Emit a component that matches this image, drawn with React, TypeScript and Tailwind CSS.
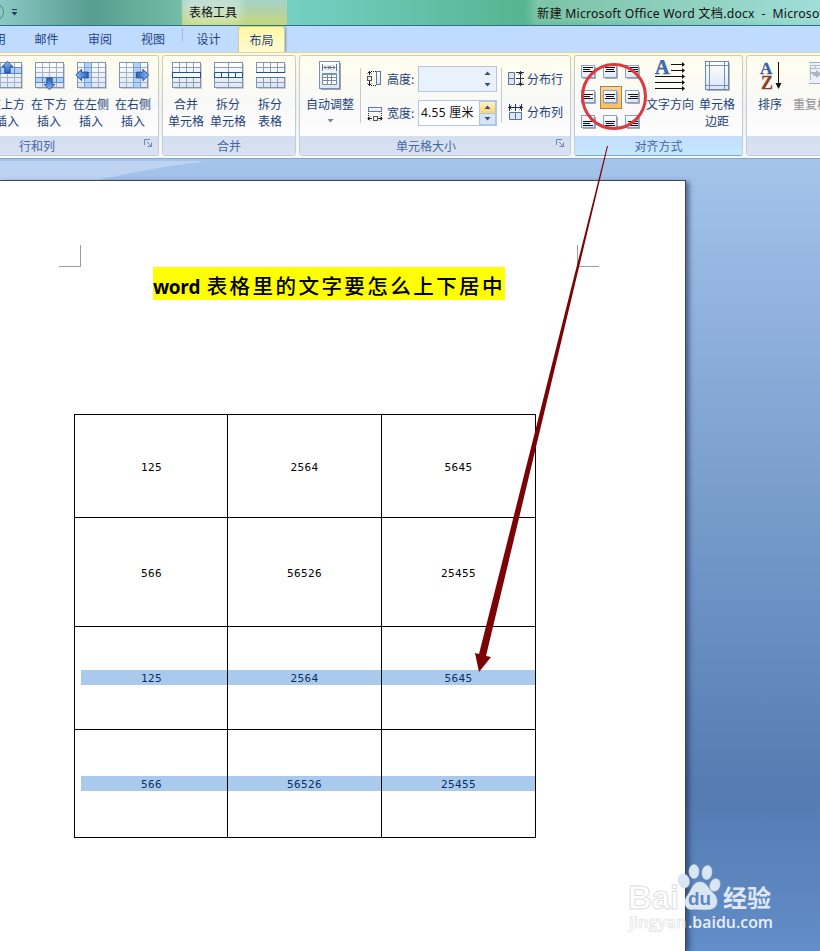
import React from "react";

const UI = "font-['Noto_Sans','Noto_Sans_CJK_SC',sans-serif]";
const CJK = "font-['Noto_Sans_CJK_SC',sans-serif]";

function GridIcon({ kind }: { kind: "above" | "below" | "left" | "right" | "merge" | "split" | "table" }) {
  const arrow = "M0 -7 L6 -1 H3 V6 H-3 V-1 H-6 Z";
  const insert = kind === "above" || kind === "below" || kind === "left" || kind === "right";
  return (
    <svg width="32" height="31" viewBox="-1 -1 32 31">
      <defs>
        <linearGradient id="sheet" x1="0" y1="0" x2="0" y2="1">
          <stop offset="0" stopColor="#fff" />
          <stop offset="1" stopColor="#dbe6f7" />
        </linearGradient>
        <linearGradient id="arrowFill" x1="0" y1="0" x2="0" y2="1">
          <stop offset="0" stopColor="#8db9f2" />
          <stop offset="1" stopColor="#2860b8" />
        </linearGradient>
      </defs>
      <rect x="3" y="3" width="28" height="25" fill="#a9b2c0" opacity=".6" />
      <rect x="1.5" y="1.5" width="28" height="25" fill="url(#sheet)" stroke="#8293ad" />
      {insert && (
        <>
          <path d="M8.5 2V26M15.5 2V26M22.5 2V26M2 6.500H29M2 11.500H29M2 16.500H29M2 21.500H29" stroke="#a6b1c5" />
          {kind === "above" && <path d="M1.500 6.500H29.500V12.500H1.500ZM8.500 6.500V12M15.500 6.500V12M22.500 6.500V12" fill="#b3d2fa" stroke="#5c86c8" />}
          {kind === "below" && <path d="M1.500 16.500H29.500V21.500H1.500ZM8.500 16.500V21M15.500 16.500V21M22.500 16.500V21" fill="#b3d2fa" stroke="#5c86c8" />}
          {kind === "left" && <path d="M8.500 1.500H15.500V26.500H8.500ZM8.500 6.500H15M8.500 11.500H15M8.500 16.500H15M8.500 21.500H15" fill="#b3d2fa" stroke="#7d9fd6" />}
          {kind === "right" && <path d="M15.500 1.500H22.500V26.500H15.500ZM15.500 6.500H22M15.500 11.500H22M15.500 16.500H22M15.500 21.500H22" fill="#b3d2fa" stroke="#7d9fd6" />}
          {kind === "above" && <path d={arrow} transform="translate(15.500 6.500) scale(.9)" fill="url(#arrowFill)" stroke="#224f93" />}
          {kind === "below" && <path d={arrow} transform="translate(15.500 22.500) rotate(180) scale(.9)" fill="url(#arrowFill)" stroke="#224f93" />}
          {kind === "left" && <path d={arrow} transform="translate(6.500 14) rotate(-90) scale(.95)" fill="url(#arrowFill)" stroke="#224f93" />}
          {kind === "right" && <path d={arrow} transform="translate(24 14) rotate(90) scale(.95)" fill="url(#arrowFill)" stroke="#224f93" />}
        </>
      )}
      {kind === "merge" && (
        <>
          <path d="M8.500 2V11M15.500 2V11M22.500 2V11M8.500 17V26M15.500 17V26M22.500 17V26M2 6.500H29M2 21.500H29" stroke="#8f9db6" />
          <rect x="1.500" y="11.500" width="28" height="5" fill="#f4f9ff" stroke="#24508c" />
        </>
      )}
      {kind === "split" && (
        <>
          <path d="M15.500 2V11M15.500 17V26M2 6.500H29M2 21.500H29" stroke="#8f9db6" />
          <path d="M1.500 11.500H29.500V16.500H1.500ZM8.500 11V17M15.500 11V17M22.500 11V17" fill="#f4f9ff" stroke="#24508c" />
        </>
      )}
      {kind === "table" && (
        <>
          <path d="M8.500 2V11M15.500 2V11M22.500 2V11M8.500 17V26M15.500 17V26M22.500 17V26M2 6.500H29M2 21.500H29" stroke="#8f9db6" />
          <rect x="0" y="12" width="32" height="4" fill="#fdfdfa" />
          <path d="M1 11.500H30" stroke="#24508c" />
          <path d="M1 16.500H30" stroke="#5b7aa8" />
        </>
      )}
    </svg>
  );
}

function BigButton({ icon, lines, width = "w-[42px]", muted = false }: { icon: React.ReactNode; lines: string[]; width?: string; muted?: boolean }) {
  return (
    <div className={`flex shrink-0 flex-col items-center pt-[4px] ${width}`}>
      <div className="flex h-[35px] items-start justify-center">{icon}</div>
      {lines.map((l) => (
        <span key={l} className={`block h-[17px] text-[12px] leading-[17px] whitespace-nowrap ${muted ? "text-[#8d8d8d]" : "text-[#1d3f7a]"}`}>
          {l}
        </span>
      ))}
    </div>
  );
}

function Launcher() {
  return (
    <svg width="9" height="9" viewBox="0 0 9 9" className="shrink-0">
      <path d="M.5 6V.5H6" fill="none" stroke="#6b86b0" />
      <path d="M3 3L7 7M7.500 3.500V7.500H3.500" fill="none" stroke="#6b86b0" />
    </svg>
  );
}

function Group({ width, title, launcher, active, children, flushLeft, shift = "" }: { width: string; title: string; launcher?: boolean; active?: boolean; flushLeft?: boolean; shift?: string; children: React.ReactNode }) {
  return (
    <section
      className={`flex h-[101px] shrink-0 flex-col overflow-hidden border border-[#c5cbd0] bg-linear-to-b from-[#fffeee] via-[#f8f9f8] to-white ${width} ${flushLeft ? "rounded-r-[3px] border-l-0" : "rounded-[3px]"} ${active ? "border-b-[#79a7c8]" : ""}`}
    >
      <div className="flex h-[80px] shrink-0">{children}</div>
      <div className={`flex h-[19px] shrink-0 items-center bg-linear-to-b ${active ? "from-[#c3defd] to-[#c5e8ff]" : "from-[#d2dff0] to-[#dae2f1]"}`}>
        <span className={`flex-1 text-center text-[12px] leading-[18px] text-[#46679f] ${shift}`}>{title}</span>
        {launcher && <div className="-ml-[14px] w-[14px] pb-[4px]"><Launcher /></div>}
      </div>
    </section>
  );
}

function AlignIcon({ h, v }: { h: number; v: number }) {
  const y = [2.5, 4.5, 6.5][v];
  const x = [2, 2, 3][h];
  const short = [0, 1, 2][h];
  return (
    <svg width="16" height="15" viewBox="0 0 16 15">
      <path d="M14.500 2V13.500H2" stroke="#a8a8a8" fill="none" />
      <rect x=".5" y=".5" width="13" height="12" fill="url(#sheet)" stroke="#8ba1c4" />
      <path d={`M${x} ${y}h10M${x + short} ${y + 2}h${[7, 8, 8][h]}M${x} ${y + 4}h10`} stroke="#111" strokeWidth="1" />
    </svg>
  );
}

function Spinner({ warm }: { warm?: boolean }) {
  return (
    <div className={`flex w-[17px] flex-col ${warm ? "border border-[#b3c4dc]" : ""}`}>
      <div className={`flex flex-1 items-center justify-center ${warm ? "bg-linear-to-b from-[#fff3c2] to-[#fbd56d]" : ""}`}>
        <svg width="7" height="4"><path d="M.5 4L3.500 .5L6.500 4Z" fill="#344f79" /></svg>
      </div>
      <div className={`flex flex-1 items-center justify-center ${warm ? "border-t border-[#b3c4dc] bg-[#d5e4f7]" : ""}`}>
        <svg width="7" height="4"><path d="M.5 0L3.500 3.500L6.500 0Z" fill="#344f79" /></svg>
      </div>
    </div>
  );
}

function Sep() {
  return <div className="mt-[12px] h-[55px] w-px shrink-0 bg-[#c2cad6]" />;
}

function TitleBar() {
  return (
    <header className={`flex h-[25px] items-start overflow-hidden bg-linear-to-r from-[#7cc3bd] via-[#6bb9ad] to-[#8ad7ce] text-[12px] text-[#111] ${UI}`}>
      <div className="flex h-full w-[182px] shrink-0 items-start bg-linear-to-r from-[#8bc9c4] via-[#579d90] to-[#75bda4]">
        <div className="-ml-[14px] mt-[3px] size-[18px] shrink-0 rounded-full border border-[#55877f]" />
        <svg className="mt-[9px] ml-[7px]" width="7" height="7">
          <path d="M1 .5H6" stroke="#1d3e5c" />
          <path d="M.5 3H6.500L3.500 6.500Z" fill="#1d3e5c" />
        </svg>
      </div>
      <div className="flex h-full w-[105px] shrink-0 bg-linear-to-b from-[#a5d3c5] via-[#b3d3a5] to-[#c8d874] pl-[7px]">
        <span className="h-[19px] rounded bg-white/30 leading-[25px] shadow-[0_0_7px_5px_rgba(255,255,255,0.3)]">表格工具</span>
      </div>
      <div className="flex h-full flex-1 overflow-hidden bg-linear-to-r from-[#76d0c4] via-[#52b18c] to-[#80d3ca] pl-[250px]">
        <span className="h-[20px] w-[300px] shrink-0 bg-white/25 text-[12.2px] leading-[28px] tracking-[0.23px] whitespace-pre shadow-[0_0_9px_6px_rgba(255,255,255,0.25)]">新建 Microsoft Office Word 文档.docx  -  Microsoft</span>
      </div>
    </header>
  );
}

function Tabs() {
  const t = "flex h-[26px] shrink-0 items-center justify-center text-[12px] text-[#1f447f] leading-none";
  return (
    <nav className={`flex h-[27px] items-end overflow-hidden border-t border-[#2c7184] bg-[#bfdbff] ${CJK}`}>
      <div className={`${t} -ml-[26px] w-[40px]`}>引用</div>
      <div className={`${t} ml-[6px] w-[53px]`}>邮件</div>
      <div className={`${t} w-[54px]`}>审阅</div>
      <div className={`${t} w-[52px]`}>视图</div>
      <div className="mb-[10px] ml-[3px] h-[14px] w-px bg-[#a1bbdf]" />
      <div className={`${t} -ml-[4px] w-[59px]`}>设计</div>
      <div className={`${t} w-[47px] rounded-t-[4px] border border-b-0 border-[#d4ce9b] bg-linear-to-b from-[#fff7a3] to-[#fffbd3] shadow-[1px_0_2px_#7f9bbd]`}>布局</div>
      <div className="ml-px mb-[1px] h-[24px] w-px bg-[#a9c3e4]" />
    </nav>
  );
}

function Ribbon() {
  return (
    <div className={`flex h-[107px] gap-[3px] overflow-hidden border-t border-b border-t-[#d8d4a6] border-b-[#8ba3c1] bg-linear-to-b from-[#fffbd8] via-[#eef1ee] to-[#f3f9fd] pt-[2px] ${CJK}`}>
      <Group width="w-[159px]" title="行和列" launcher flushLeft shift="pr-[84px]">
        <div className="-ml-[14px] flex">
          <BigButton icon={<GridIcon kind="above" />} lines={["在上方", "插入"]} />
          <BigButton icon={<GridIcon kind="below" />} lines={["在下方", "插入"]} />
          <BigButton icon={<GridIcon kind="left" />} lines={["在左侧", "插入"]} />
          <BigButton icon={<GridIcon kind="right" />} lines={["在右侧", "插入"]} />
        </div>
      </Group>
      <Group width="w-[134px]" title="合并">
        <div className="flex pl-[2px]">
          <BigButton icon={<GridIcon kind="merge" />} lines={["合并", "单元格"]} />
          <BigButton icon={<GridIcon kind="split" />} lines={["拆分", "单元格"]} />
          <BigButton icon={<GridIcon kind="table" />} lines={["拆分", "表格"]} />
        </div>
      </Group>
      <Group width="w-[272px]" title="单元格大小" launcher shift="pr-[18px]">
        <div className="flex w-[60px] shrink-0 flex-col items-center">
          <BigButton
            width="w-[58px]"
            icon={
              <svg width="24" height="31">
                <path d="M22.500 3V29.500H3" fill="none" stroke="#9aa4b1" />
                <rect x="1.500" y="1.500" width="20" height="27" fill="url(#sheet)" stroke="#7c90ad" />
                <path d="M4.500 4V11M18.500 4V11M6 7.500H17M8 5.500L6 7.500L8 9.500M15 5.500L17 7.500L15 9.500M10 5.500L13 9.500M13 5.500L10 9.500" fill="none" stroke="#61718b" />
                <path d="M4.500 13.500H18.500V24.500H4.500ZM9.500 13V25M13.500 13V25M4 17.500H19M4 20.500H19" fill="#fff" stroke="#7589a9" />
                <rect x="5" y="13" width="14" height="2" fill="#7393c0" />
              </svg>
            }
            lines={["自动调整"]}
          />
          <svg className="mt-[7px]" width="7" height="4"><path d="M.5 0H6.500L3.500 3.500Z" fill="#6c84a8" /></svg>
        </div>
        <Sep />
        <div className="flex w-[140px] shrink-0 flex-col pt-[9px] pl-[6px]">
          <div className="flex h-[27px] items-center">
            <svg width="16" height="17" viewBox="0 0 16 17" className="shrink-0">
              <path d="M2.500 1V5M.5 3.500L2.500 1.500L4.500 3.500M2.500 11V16M.5 13.500L2.500 15.500L4.500 13.500" fill="none" stroke="#222" />
              <path d="M4 1.500H9M4 15.500H9" stroke="#222" strokeDasharray="1 1" />
              <rect x=".5" y="6.500" width="4" height="4" fill="#eee" stroke="#555" />
              <rect x="9.500" y="1.500" width="4" height="13" fill="url(#sheet)" stroke="#60789f" />
            </svg>
            <span className="ml-[4px] w-[31px] shrink-0 text-[12px] whitespace-nowrap text-[#1d3f7a]">高度:</span>
            <div className="flex h-[26px] w-[79px] shrink-0 justify-end border border-[#b1c6e1] bg-[#e9f1fb]"><Spinner /></div>
          </div>
          <div className="mt-[8px] flex h-[26px] items-center">
            <svg width="16" height="17" viewBox="0 0 16 17" className="shrink-0">
              <rect x="1.500" y="2.500" width="13" height="4" fill="url(#sheet)" stroke="#60789f" />
              <path d="M1.500 8V16M14.500 8V16" stroke="#222" strokeDasharray="1 1" />
              <path d="M1 13.500H5M3 11.500L1 13.500L3 15.500M11 13.500H15M13 11.500L15 13.500L13 15.500" fill="none" stroke="#222" />
              <rect x="6.500" y="11.500" width="4" height="4" fill="#eee" stroke="#555" />
            </svg>
            <span className="ml-[4px] w-[31px] shrink-0 text-[12px] whitespace-nowrap text-[#1d3f7a]">宽度:</span>
            <div className="flex h-[26px] w-[79px] shrink-0 items-stretch justify-between border border-[#b1c6e1] bg-white pl-[2px]">
              <span className={`text-[12px] leading-[24px] tracking-[0.25px] whitespace-nowrap text-[#111] ${UI}`}>4.55 厘米</span>
              <Spinner warm />
            </div>
          </div>
        </div>
        <Sep />
        <div className="flex flex-col pt-[14px] pl-[6px]">
          <div className="flex h-[17px] items-center gap-[3px]">
            <svg width="16" height="15" viewBox="0 0 16 15">
              <path d="M.5 1.500H6.500V7.500H.5ZM.5 7.500H6.500V13.500H.5Z" fill="#dbe6f7" stroke="#5c7397" />
              <path d="M8 1.500H16M8 7.500H16M8 13.500H16M12.500 0V15M10.500 3.500L12.500 1.500L14.500 3.500M10.500 11.500L12.500 13.500L14.500 11.500" fill="none" stroke="#24324a" />
            </svg>
            <span className="text-[12px] leading-4 whitespace-nowrap text-[#1d3f7a]">分布行</span>
          </div>
          <div className="mt-[16px] flex h-[17px] items-center gap-[3px]">
            <svg width="16" height="16" viewBox="0 0 16 16">
              <path d="M1.500 8.500H7.500V15.500H1.500ZM7.500 8.500H13.500V15.500H7.500Z" fill="#dbe6f7" stroke="#5c7397" />
              <path d="M1.500 0V7M7.500 0V7M13.500 0V7M0 3.500H15M3.500 1.500L1.500 3.500L3.500 5.500M11.500 1.500L13.500 3.500L11.500 5.500" fill="none" stroke="#24324a" />
            </svg>
            <span className="text-[12px] leading-4 whitespace-nowrap text-[#1d3f7a]">分布列</span>
          </div>
        </div>
      </Group>
      <Group width="w-[169px]" title="对齐方式" active>
        <div className="grid h-[79px] w-[69px] shrink-0 grid-cols-3 grid-rows-3 pt-[4px] pl-[3px]">
          {[0, 1, 2].map((v) =>
            [0, 1, 2].map((h) => (
              <div key={`${v}${h}`} className={`flex items-center justify-center ${h === 1 && v === 1 ? "my-[1px] border border-[#a98447] bg-linear-to-b from-[#fcd59b] to-[#fdbc58]" : ""}`}>
                <AlignIcon h={h} v={v} />
              </div>
            )),
          )}
        </div>
        <BigButton
          width="w-[52px]"
          icon={
            <svg width="32" height="33" viewBox="-1 -1 32 33">
              <text x="0" y="13" fontFamily="Liberation Serif, serif" fontWeight="700" fontSize="20" fill="#3f6fb2" stroke="#2b5594" strokeWidth=".4">A</text>
              <path d="M16 3.500H29M16 9.500H29M0 15.500H29M0 21.500H29M0 27.500H29" stroke="#111" />
              <path d="M27 1L30 3.500L27 6ZM27 7L30 9.500L27 12ZM27 13L30 15.500L27 18ZM27 19L30 21.500L27 24ZM27 25L30 27.500L27 30Z" fill="#111" />
            </svg>
          }
          lines={["文字方向"]}
        />
        <BigButton
          icon={
            <svg width="26" height="31">
              <path d="M25.500 3V30.500H3" fill="none" stroke="#aab3be" />
              <rect x="1.500" y="1.500" width="23" height="28" fill="url(#sheet)" stroke="#6f86a6" />
              <path d="M5.500 1V30M20.500 1V30M1 5.500H25M1 25.500H25" stroke="#7890af" />
            </svg>
          }
          lines={["单元格", "边距"]}
        />
      </Group>
      <Group width="w-[150px]" title="">
        <div className="flex pl-[2px]">
          <BigButton
            icon={
              <svg width="24" height="32">
                <text x="2" y="14" fontFamily="Liberation Serif, serif" fontWeight="700" fontSize="17" fill="#365f9f" stroke="#365f9f" strokeWidth=".3">A</text>
                <text x="3" y="29" fontFamily="Liberation Serif, serif" fontWeight="700" fontSize="18" fill="#8d3f2b" stroke="#8d3f2b" strokeWidth=".3">Z</text>
                <path d="M20.500 2V26" stroke="#111" />
                <path d="M17.500 23H23.500L20.500 29Z" fill="#111" />
              </svg>
            }
            lines={["排序"]}
          />
          <BigButton
            width="w-[64px]"
            muted
            icon={
              <svg width="28" height="26" viewBox="3 0 28 26">
                <rect x="1.500" y="2.500" width="21" height="21" fill="#edf1f6" stroke="#9dadc3" />
                <path d="M4 5.500H21M4 8.500H21M4.500 5V20M9.500 5V9M14.500 5V9" stroke="#b1bdcc" />
                <path d="M5 12H10V10L16 14L10 18V16H7V14H5Z" fill="#a8b6c8" />
              </svg>
            }
            lines={["重复标题行"]}
          />
        </div>
      </Group>
    </div>
  );
}

const rows = [
  { h: "h-[103px]", cells: ["125", "2564", "5645"], sel: false, pad: "pt-[3px]" },
  { h: "h-[109px]", cells: ["566", "56526", "25455"], sel: false, pad: "pt-[3px]" },
  { h: "h-[103px]", cells: ["125", "2564", "5645"], sel: true, pad: "pb-[1px]" },
  { h: "h-[108px]", cells: ["566", "56526", "25455"], sel: true, pad: "pb-0" },
];

function DocTable() {
  return (
    <div className="ml-[74px] w-[462px] border-t border-l border-black font-['DejaVu_Sans_Mono',monospace] text-[11px] tracking-[0.38px]">
      {rows.map((r, i) => (
        <div key={i} className={`flex items-center border-b border-black ${r.h}`}>
          {r.cells.map((c, j) => (
            <div key={j} className={`flex h-full items-center border-r border-black ${j === 0 ? "w-[153px]" : "w-[154px]"} ${r.pad}`}>
              <div className={`flex h-[15px] flex-1 items-center justify-center leading-[15px] ${r.sel ? "bg-[#a9caed] pt-[2px] text-[#082f60]" : "text-black"} ${j === 0 ? "ml-[6px] pr-[5px]" : ""}`}>{c}</div>
            </div>
          ))}
        </div>
      ))}
    </div>
  );
}

function Watermark() {
  return (
    <svg className="absolute top-[855px] left-[620px]" width="170" height="84">
      <text x="8" y="54" fontFamily="Liberation Sans, sans-serif" fontWeight="700" fontSize="34" textLength="51" lengthAdjust="spacingAndGlyphs" fill="#fff" fillOpacity=".9" stroke="#dedede" strokeWidth="1">Bai</text>
      <g fill="#dbe6f4" stroke="#c9d2de" strokeOpacity=".55" strokeWidth="1">
        <ellipse cx="64" cy="26" rx="5.500" ry="7" transform="rotate(-15 64 26)" />
        <ellipse cx="74" cy="16.500" rx="5" ry="7" />
        <ellipse cx="87" cy="17.500" rx="5" ry="7" transform="rotate(8 87 17.500)" />
        <ellipse cx="95" cy="30" rx="5" ry="6.500" transform="rotate(20 95 30)" />
        <path d="M79 27C86 26 88 33 93 38C99 43 99 54 89 54.500C83 55 77 54 72 54.500C65 55 63 47 67 41C72 35 72 28 79 27Z" />
      </g>
      <text x="68" y="50" fontFamily="Liberation Sans, sans-serif" fontWeight="700" fontSize="19" textLength="23" lengthAdjust="spacingAndGlyphs" fill="#5c86bf">du</text>
      <text x="103" y="52" fontSize="24" textLength="48" lengthAdjust="spacingAndGlyphs" fontWeight="700" fontFamily="Noto Sans CJK SC, sans-serif" fill="#dfe8f4">经验</text>
      <text x="9" y="73" fontSize="16" textLength="57" lengthAdjust="spacingAndGlyphs" fontFamily="Open Sans, sans-serif" fontWeight="600" fill="#fff" stroke="#dedede" strokeWidth=".6">jingyan</text>
      <text x="68" y="73" fontSize="16" textLength="85" lengthAdjust="spacingAndGlyphs" fontFamily="Open Sans, sans-serif" fontWeight="600" fill="#e9f0f8">.baidu.com</text>
    </svg>
  );
}

export default function App() {
  return (
    <div className="relative flex h-[951px] w-[820px] flex-col overflow-hidden">
      <TitleBar />
      <Tabs />
      <Ribbon />
      <main className="flex h-[792px] flex-col bg-linear-to-b from-[#a4c4eb] from-0% via-[#557bb2] via-80% to-[#628dc8] to-100%">
        <svg width="820" height="21" className="block shrink-0">
          <path d="M0 2H208Q150 9 98 21H0Z" fill="#bdd3f1" />
        </svg>
        <article className="flex w-[686px] flex-1 flex-col border-t border-r border-[#3d4652] bg-white shadow-[3px_2px_5px_rgba(20,40,75,0.6)]">
          <div className="mt-[64px] flex h-[22px] pl-[59px]">
            <div className="w-[22px] border-r border-b border-[#9d9d9d]" />
            <div className="ml-[496px] w-[22px] border-b border-l border-[#9d9d9d]" />
          </div>
          <h1 className={`ml-[153px] flex h-[33px] w-[352px] items-center bg-[#ffff00] whitespace-nowrap text-black ${CJK}`}>
            <span className="w-[54px] pt-[7px] font-['Open_Sans',sans-serif] text-[19px] leading-none font-bold tracking-[-0.4px]">word</span>
            <span className="pt-[4px] text-[20.5px] leading-none font-medium tracking-[2.45px]">表格里的文字要怎么上下居中</span>
          </h1>
          <div className="h-[114px]" />
          <DocTable />
        </article>
      </main>
      <svg className="absolute top-0 left-0" width="820" height="951">
        <ellipse cx="614" cy="96.500" rx="31.500" ry="32" fill="none" stroke="#d93b40" strokeWidth="3" />
        <path d="M608 146L607 146L479 654L475 653L479 672L491 657L486 656Z" fill="#7b0205" />
      </svg>
      <Watermark />
    </div>
  );
}
